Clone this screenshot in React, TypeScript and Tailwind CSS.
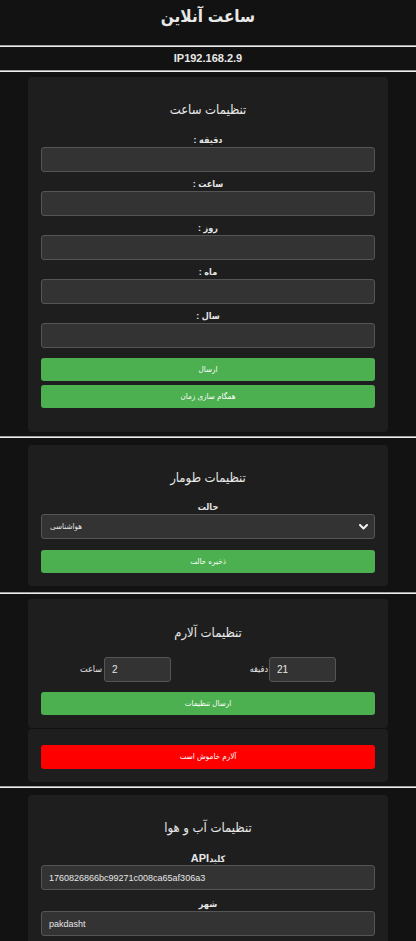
import React from 'react';

const font = "font-['Liberation_Sans','DejaVu_Sans_Condensed','DejaVu_Sans',sans-serif]";

function Rule() {
  return <div className="h-0 border-t border-b border-t-[#a0a0a0] border-b-[#eeeeee]" />;
}

function Field({ label, value, className = '' }: { label: React.ReactNode; value?: string; className?: string }) {
  return (
    <div className={className}>
      <div dir="rtl" className="h-[14px] text-center text-[9px] font-bold leading-[14px] text-[#e6e6e6]">{label}</div>
      <input
        readOnly
        value={value ?? ''}
        className="block w-full h-[25px] px-[7px] bg-[#333333] border border-[#555555] rounded-[3px] text-[9px] text-[#e6e6e6] outline-none"
      />
    </div>
  );
}

function Button({ text, red = false, className = '' }: { text: string; red?: boolean; className?: string }) {
  return (
    <button
      className={`block w-full rounded-[3px] text-[8px] text-white ${red ? 'h-[24px] bg-[#ff0000]' : 'h-[23px] bg-[#4caf50]'} ${className}`}
    >
      {text}
    </button>
  );
}

function Title({ text }: { text: string }) {
  return <h2 className="h-[20px] text-center text-[13px] leading-[20px] text-[#e8e8e8]">{text}</h2>;
}

export default function App() {
  return (
    <div className={`min-h-[941px] bg-[#121212] text-[#e8e8e8] ${font}`}>
      <h1 className="h-[45px] pt-[5px] text-center text-[17px] leading-[24px] font-bold">ساعت آنلاین</h1>
      <Rule />
      <div className="h-[23px] flex items-center justify-center text-[11px] font-bold">IP192.168.2.9</div>
      <Rule />

      {/* clock settings */}
      <div className="mx-[28px] mt-[5px] bg-[#1e1e1e] rounded-[4px] px-[13px] pt-[23px] pb-[24px]">
        <Title text="تنظیمات ساعت" />
        <Field label="دقیقه :" className="mt-[13px]" />
        <Field label="ساعت :" className="mt-[5px]" />
        <Field label="روز :" className="mt-[5px]" />
        <Field label="ماه :" className="mt-[5px]" />
        <Field label="سال :" className="mt-[5px]" />
        <Button text="ارسال" className="mt-[10px]" />
        <Button text="همگام سازی زمان" className="mt-[4px]" />
      </div>
      <div className="mt-[4px]">
        <Rule />
      </div>

      {/* scroll settings */}
      <div className="mx-[28px] mt-[7px] bg-[#1e1e1e] rounded-[4px] px-[13px] pt-[23px] pb-[13px]">
        <Title text="تنظیمات طومار" />
        <div className="mt-[12px] h-[14px] text-center text-[9px] font-bold leading-[14px] text-[#e6e6e6]">حالت</div>
        <div className="relative">
          <select className="block w-full h-[25px] pl-[8px] appearance-none bg-[#333333] border border-[#555555] rounded-[3px] text-[8px] text-[#e6e6e6] outline-none">
            <option>هواشناسی</option>
          </select>
          <svg className="absolute right-[7px] top-[10px] pointer-events-none" width="9" height="6" viewBox="0 0 9 6">
            <polyline points="1,1 4.5,4.5 8,1" fill="none" stroke="#f2f2f2" strokeWidth="2" strokeLinecap="round" strokeLinejoin="round" />
          </svg>
        </div>
        <Button text="ذخیره حالت" className="mt-[11px]" />
      </div>
      <div className="mt-[6px]">
        <Rule />
      </div>

      {/* alarm settings */}
      <div className="mx-[28px] mt-[5px] bg-[#1e1e1e] rounded-[4px] px-[13px] pt-[24px] pb-[13px]">
        <Title text="تنظیمات آلارم" />
        <div className="mt-[14px] flex justify-around items-center">
          <div className="flex items-center">
            <span className="w-[17px] mr-[7px] text-[9px] text-right">ساعت</span>
            <input readOnly value="2" className="w-[67px] h-[25px] px-[7px] bg-[#333333] border border-[#555555] rounded-[3px] text-[10px] text-[#e6e6e6] outline-none" />
          </div>
          <div className="flex items-center">
            <span className="w-[19px] mr-[1px] text-[9px] text-right">دقیقه</span>
            <input readOnly value="21" className="w-[67px] h-[25px] px-[7px] bg-[#333333] border border-[#555555] rounded-[3px] text-[10px] text-[#e6e6e6] outline-none" />
          </div>
        </div>
        <Button text="ارسال تنظیمات" className="mt-[10px]" />
      </div>
      <div className="mx-[28px] mt-[1px] bg-[#1e1e1e] rounded-[4px] px-[13px] pt-[16px] pb-[13px]">
        <Button text="آلارم خاموش است" red />
      </div>
      <div className="mt-[4px]">
        <Rule />
      </div>

      {/* weather settings */}
      <div className="mx-[28px] mt-[7px] bg-[#1e1e1e] rounded-[4px] px-[13px] pt-[23px] pb-[20px]">
        <Title text="تنظیمات آب و هوا" />
        <Field label={<>کلید<span className="text-[11px]">API</span></>} value="1760826866bc99271c008ca65af306a3" className="mt-[13px]" />
        <Field label="شهر" value="pakdasht" className="mt-[7px]" />
      </div>
    </div>
  );
}
